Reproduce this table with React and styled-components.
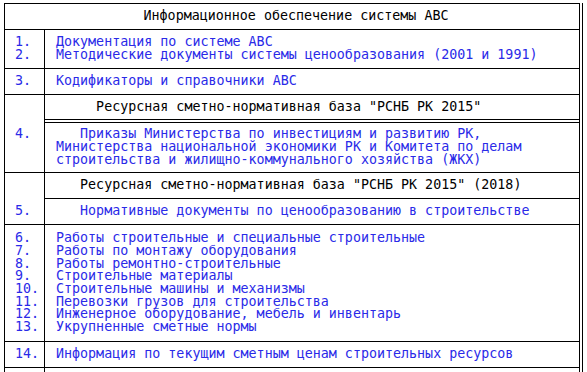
import React from 'react';
import styled, { createGlobalStyle } from 'styled-components';

const GlobalStyle = createGlobalStyle`
  html, body {
    margin: 0;
    padding: 0;
    background: #ffffff;
  }
  body {
    font-family: "DejaVu Sans Mono", "Liberation Mono", monospace;
    font-size: 13.33px;
    line-height: 12.7px;
    color: #000000;
  }
`;

const Page = styled.div`
  padding: 3px 0 0 4px;
`;

// outer frame gives the second line on the right edge
const Frame = styled.div`
  box-sizing: border-box;
  width: 579px;
  border-right: 1px solid #000;
`;

const Sheet = styled.div`
  box-sizing: border-box;
  width: 576px;
  border: 1px solid #000;
  border-bottom: none;
`;

const Title = styled.div`
  box-sizing: border-box;
  height: 26px;
  display: flex;
  align-items: center;
  justify-content: center;
  padding-left: 8px;
  border-bottom: 1px solid #000;
  white-space: pre;
`;

const Row = styled.div`
  box-sizing: border-box;
  display: grid;
  grid-template-columns: 40px 1fr;
  height: ${(p) => p.$h}px;
  border-bottom: ${(p) => (p.$open ? 'none' : '1px solid #000')};
`;

const Section = styled.div`
  box-sizing: border-box;
  display: grid;
  grid-template-columns: 40px 1fr;
  grid-template-rows: ${(p) => p.$head}px ${(p) => p.$body}px;
  border-bottom: 1px solid #000;
`;

const NumCell = styled.div`
  box-sizing: border-box;
  display: flex;
  align-items: ${(p) => (p.$pad != null ? 'flex-start' : 'center')};
  padding-left: 10px;
  padding-top: ${(p) => p.$pad || 0}px;
  border-right: 1px solid #000;
  color: #2a2ae8;
  white-space: pre;
`;

const Blank = styled.div`
  border-right: 1px solid #000;
`;

const TextCell = styled.div`
  box-sizing: border-box;
  display: flex;
  align-items: center;
  padding-left: 11px;
  color: #2a2ae8;
  white-space: pre;
`;

const SubHead = styled.div`
  box-sizing: border-box;
  display: flex;
  align-items: center;
  padding-left: 11px;
  border-bottom: 1px solid #000;
  white-space: pre;
`;

const SubBody = styled(TextCell)`
  margin-top: ${(p) => (p.$double ? 2 : 0)}px;
  border-top: ${(p) => (p.$double ? '1px solid #000' : 'none')};
`;

const works = [
  ['6.', 'Работы строительные и специальные строительные'],
  ['7.', 'Работы по монтажу оборудования'],
  ['8.', 'Работы ремонтно-строительные'],
  ['9.', 'Строительные материалы'],
  ['10.', 'Строительные машины и механизмы'],
  ['11.', 'Перевозки грузов для строительства'],
  ['12.', 'Инженерное оборудование, мебель и инвентарь'],
  ['13.', 'Укрупненные сметные нормы'],
];

export default function App() {
  return (
    <Page>
      <GlobalStyle />
      <Frame>
        <Sheet>
          <Title>Информационное обеспечение системы АВС</Title>

          <Row $h={39}>
            <NumCell>{'1.\n2.'}</NumCell>
            <TextCell>
              {'Документация по системе АВС\nМетодические документы системы ценообразования (2001 и 1991)'}
            </TextCell>
          </Row>

          <Row $h={26}>
            <NumCell>3.</NumCell>
            <TextCell>Кодификаторы и справочники АВС</TextCell>
          </Row>

          <Section $head={25} $body={52}>
            <Blank />
            <SubHead>{'     Ресурсная сметно-нормативная база "РСНБ РК 2015"'}</SubHead>
            <NumCell $pad={8}>4.</NumCell>
            <SubBody $double>
              {'   Приказы Министерства по инвестициям и развитию РК,\nМинистерства национальной экономики РК и Комитета по делам\nстроительства и жилищно-коммунального хозяйства (ЖКХ)'}
            </SubBody>
          </Section>

          <Section $head={26} $body={25}>
            <Blank />
            <SubHead>{'   Ресурсная сметно-нормативная база "РСНБ РК 2015" (2018)'}</SubHead>
            <NumCell $pad={6}>5.</NumCell>
            <SubBody>{'   Нормативные документы по ценообразованию в строительстве'}</SubBody>
          </Section>

          <Row $h={117}>
            <NumCell>{works.map((w) => w[0]).join('\n')}</NumCell>
            <TextCell>{works.map((w) => w[1]).join('\n')}</TextCell>
          </Row>

          <Row $h={26}>
            <NumCell>14.</NumCell>
            <TextCell>Информация по текущим сметным ценам строительных ресурсов</TextCell>
          </Row>

          <Row $h={4} $open>
            <NumCell />
            <TextCell />
          </Row>
        </Sheet>
      </Frame>
    </Page>
  );
}
